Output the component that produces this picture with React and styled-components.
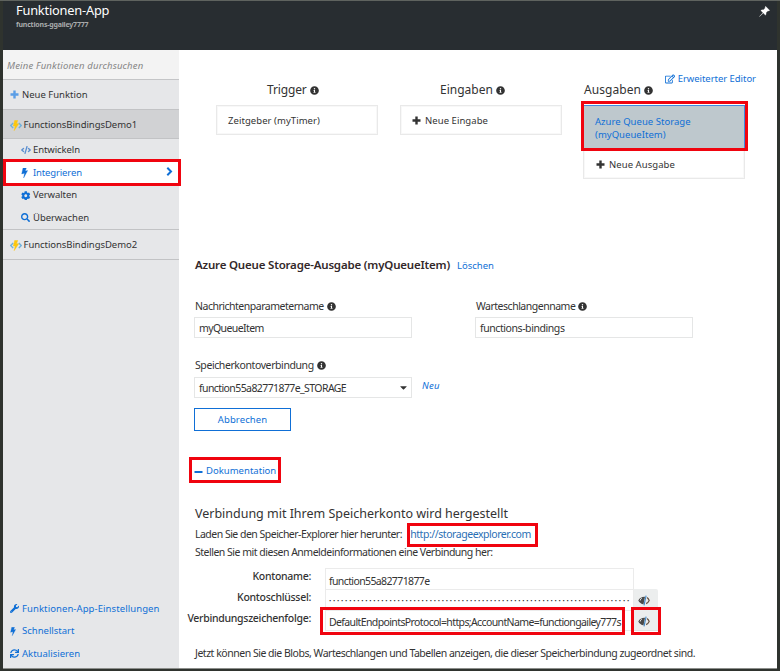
import React from 'react';
import styled, { createGlobalStyle, css } from 'styled-components';
import { FaInfoCircle, FaWrench, FaCode, FaCog, FaSearch, FaSync, FaRegEdit, FaCaretDown } from 'react-icons/fa';

const Global = createGlobalStyle`
  * { box-sizing: border-box; }
  body { margin: 0; background: #2f332e; }
  svg { display: block; flex: none; }
`;

const BLUE = '#0f6fd6';
const RED = '#f0040f';

const Frame = styled.div`
  width: 780px;
  height: 671px;
  overflow: hidden;
  display: flex;
  flex-direction: column;
  background: #2f332e;
  border-top: 1px solid #5f635f;
  padding: 0 3px 2px;
  font-family: "Noto Sans", sans-serif;
  font-size: 9.5px;
  line-height: 16px;
  color: #333;
`;

const Header = styled.header`
  height: 49px;
  flex: none;
  display: flex;
  justify-content: space-between;
  background: #282d31;
  color: #fff;
  padding: 1px 7px 0 13px;
`;

const HeaderTitle = styled.h1`
  margin: 0;
  font-size: 12.8px;
  font-weight: 400;
  letter-spacing: -0.2px;
  line-height: 17px;
`;

const HeaderSub = styled.div`
  font-size: 7px;
  font-weight: 700;
  letter-spacing: -0.2px;
  line-height: 11px;
  color: #a9abac;
`;

const Pin = styled.div`
  padding-top: 4px;
`;

const Body = styled.div`
  flex: 1;
  min-height: 0;
  display: flex;
  border-bottom: 1px solid #8c8e8b;
`;

const Sidebar = styled.nav`
  width: 176px;
  flex: none;
  display: flex;
  flex-direction: column;
  background: #e6e7e9;
`;

const SearchBox = styled.div`
  height: 30px;
  background: #f3f3f3;
  border-bottom: 1px solid #c4c5c7;
  padding-left: 4px;
  line-height: 31px;
  font-style: italic;
  letter-spacing: 0.18px;
  color: #858585;
`;

const SideRow = styled.div`
  height: ${p => p.$h || 30}px;
  display: flex;
  align-items: center;
  gap: ${p => p.$gap || 3}px;
  padding: ${p => p.$pt || 0}px 0 0 7px;
  border-bottom: 1px solid #c2c3c5;
  letter-spacing: ${p => p.$ls || 0}px;
  background: ${p => (p.$active ? '#d1d2d4' : 'transparent')};
`;

const SubList = styled.div`
  height: 91px;
  flex: none;
  border-bottom: 1px solid #c2c3c5;
  display: flex;
  flex-direction: column;
`;

const SubRow = styled.div`
  position: relative;
  height: 22.7px;
  display: flex;
  align-items: center;
  letter-spacing: ${p => p.$ls || -0.08}px;
  ${p => p.$on && css`background: #fff; color: ${BLUE};`}
`;

const SubIcon = styled.span`
  width: 14px;
  margin-left: 16px;
  padding-left: 2px;
  display: flex;
  color: ${BLUE};
`;

const Chevron = styled.span`
  margin-left: auto;
  margin-right: 6px;
  padding-bottom: 2px;
`;

const SideFooter = styled.div`
  margin-top: auto;
  padding-bottom: 3px;
  color: ${BLUE};
`;

const FooterRow = styled.div`
  height: 22.6px;
  display: flex;
  align-items: center;
  padding-left: 7px;
  letter-spacing: ${p => p.$ls || 0}px;
`;

const FooterIcon = styled.span`
  width: 12px;
  display: flex;
`;

const Mark = styled.div`
  position: absolute;
  pointer-events: none;
  inset: ${p => p.$inset};
  border: 3px solid ${RED};
  z-index: 2;
`;

const Main = styled.main`
  flex: 1;
  background: #fff;
  padding: 21px 0 0 15px;
  min-width: 0;
`;

const EditorLink = styled.a`
  display: flex;
  justify-content: flex-end;
  align-items: center;
  gap: 3px;
  height: 16px;
  padding-right: 21px;
  color: ${BLUE};
  letter-spacing: -0.04px;
`;

const Columns = styled.div`
  display: grid;
  grid-template-columns: 162px 162px 162px;
  column-gap: 22px;
  margin: -7px 0 0 22px;
  height: 175px;
  align-content: start;
`;

const ColumnTitle = styled.h2`
  margin: 0 0 5px;
  height: 20px;
  display: flex;
  align-items: center;
  gap: 3px;
  padding-left: ${p => p.$pad}px;
  font-size: 12px;
  font-weight: 400;
  letter-spacing: ${p => p.$ls || 0}px;
`;

const Column = styled.section`
  margin-left: ${p => (p.$last ? '-1px' : 0)};
  margin-right: ${p => (p.$last ? '1px' : 0)};
`;

const Card = styled.div`
  height: 30px;
  border: 1px solid #e9e9e9;
  box-shadow: inset 0 0 0 1px #f8f8f8;
  display: flex;
  align-items: center;
  gap: 4px;
  padding: 1px 0 0 ${p => p.$pad || 11}px;
  letter-spacing: 0.06px;
`;

const SelectedCard = styled.div`
  position: relative;
  height: 44px;
  border: 1px solid #3f8ae0;
  background: #bec8cd;
  color: ${BLUE};
  padding: 9px 0 0 11px;
  line-height: 13px;
  letter-spacing: 0.03px;
`;

const TitleRow = styled.div`
  display: flex;
  align-items: center;
  gap: 7px;
  height: 20px;
  padding-left: 1px;
`;

const Title = styled.h3`
  margin: 0;
  font-size: 11.5px;
  font-weight: 600;
  letter-spacing: -0.188px;
  color: #33282a;
  white-space: nowrap;
`;

const Link = styled.a`
  color: ${BLUE};
  font-style: ${p => (p.$italic ? 'italic' : 'normal')};
  letter-spacing: ${p => (p.$italic ? 0.3 : 0)}px;
`;

const DeleteLink = styled(Link)`
  padding-top: 2px;
`;

const FieldRow = styled.div`
  display: flex;
  align-items: flex-end;
  gap: ${p => p.$gap}px;
  margin-top: ${p => p.$mt}px;
`;

const Field = styled.label`
  display: block;
  width: 218px;
`;

const Label = styled.div`
  display: flex;
  align-items: center;
  gap: 3px;
  height: 16px;
  padding-left: 1px;
  margin-bottom: ${p => p.$mb || 3}px;
  font-size: 10.5px;
  letter-spacing: ${p => p.$ls}px;
`;

const Box = styled.div`
  height: 21px;
  border: 1px solid #e5e6e6;
  display: flex;
  align-items: center;
  justify-content: space-between;
  padding: ${p => (p.$flat ? 0 : 1)}px 2px 0 4px;
  font-size: 10.5px;
  letter-spacing: ${p => p.$ls}px;
`;

const NewLink = styled(Link)`
  margin-bottom: 4px;
`;

const CancelButton = styled.button`
  display: block;
  width: 97px;
  height: 23px;
  margin: 10px 0 0;
  padding: 0;
  border: 1px solid ${BLUE};
  background: #fff;
  color: ${BLUE};
  font: inherit;
  letter-spacing: 0.11px;
`;

const DocToggle = styled.div`
  position: relative;
  width: 84px;
  height: 18px;
  margin-top: 31px;
  display: flex;
  align-items: center;
  gap: 3px;
  color: ${BLUE};
  letter-spacing: 0.02px;
`;

const DocTitle = styled.h4`
  margin: 24px 0 0 1px;
  font-size: 12.5px;
  font-weight: 400;
  line-height: 20px;
  letter-spacing: -0.014px;
`;

const Text = styled.p`
  margin: ${p => p.$mt || 0}px 0 0 1px;
  font-size: 10.5px;
  line-height: 18px;
  white-space: nowrap;
  letter-spacing: ${p => p.$ls}px;
`;

const Marked = styled.span`
  position: relative;
  display: inline-block;
  margin-left: 6px;
  color: #2a6fb5;
  letter-spacing: -0.45px;
`;

const Credentials = styled.div`
  display: grid;
  grid-template-columns: 117px 309px 24px;
  margin-top: 7px;
`;

const CredLabels = styled.div`
  margin: -2px 0 0 -7px;
  width: 124px;
  text-align: right;
  font-size: 10.5px;
  font-weight: 500;
  line-height: 21px;
  letter-spacing: -0.29px;
`;

const CredFields = styled.div`
  margin-left: 14px;
  width: 309px;
`;

const CredField = styled.div`
  position: relative;
  height: 21px;
  border: 1px solid #ebebeb;
  border-bottom-width: ${p => (p.$end ? 1 : 0)}px;
  padding-left: 3px;
  font-size: ${p => p.$fs || 10.5}px;
  line-height: ${p => p.$lh || 23}px;
  letter-spacing: ${p => p.$ls}px;
  white-space: nowrap;
`;

const Eyes = styled.div`
  margin: 21px 0 0 14px;
  width: 24px;
`;

const EyeCell = styled.div`
  position: relative;
  height: 21px;
  display: flex;
  align-items: center;
  justify-content: center;
  padding: 2px 4px 0 0;
  background: #eceeee;
  border-bottom: 1px solid #dfe1e1;
  border-radius: ${p => (p.$first ? '0 2px 0 0' : 0)};
`;

const Bolt = ({ w = 7, h = 10 }) => (
  <svg width={w} height={h} viewBox="0 0 7 10">
    <path d="M2 0h3.3L4.3 3l2.4-.4L2.6 10l.9-4.7-2.8.6z" fill="currentColor" stroke="currentColor" strokeWidth=".3" />
  </svg>
);

const Plus = ({ color = 'currentColor' }) => (
  <svg width="9" height="9" viewBox="0 0 9 9">
    <path d="M4.5 .5v8M.5 4.500h8" stroke={color} strokeWidth="2.400" />
  </svg>
);

const Minus = () => (
  <svg width="9" height="9" viewBox="0 0 9 9">
    <path d="M.5 5h8" stroke="currentColor" strokeWidth="2" />
  </svg>
);

const ChevronIcon = () => (
  <svg width="7" height="9" viewBox="0 0 7 9">
    <path d="M1.300 .8L5 4.500 1.300 8.200" fill="none" stroke="currentColor" strokeWidth="2" />
  </svg>
);

const PinIcon = () => (
  <svg width="11" height="11" viewBox="0 0 11 11">
    <path d="M6.600.3l4.100 4.100-1 .5-.7-.2-2 2c.3 1 .1 1.800-.5 2.500L4.300 7 .8 10.300.4 10.600.7 10.200 4 6.700 1.800 4.500c.7-.6 1.500-.8 2.500-.5l2-2-.2-.7z" fill="#fff" stroke="#fff" strokeWidth=".3" />
  </svg>
);

const FunctionIcon = () => (
  <svg width="12" height="11" viewBox="0 0 12 11">
    <path d="M3.2 3L.8 5.5l2.4 2.6M8.8 3l2.4 2.5-2.4 2.6" fill="none" stroke="#6fb1dc" strokeWidth="1.4" />
    <path d="M4.7.4h3L6.5 3.8h2.2L4.2 10.6l1-4.5H3.3z" fill="#fcc70d" stroke="#fcc70d" strokeWidth=".5" />
  </svg>
);

const EyeIcon = () => (
  <svg width="12" height="11" viewBox="0 0 12 11">
    <path d="M.3 5.500C1.800 2.600 4 1.500 7 1.700L5.500 9.300C3.200 9 1.400 7.700.3 5.500z" fill="#4a4a4a" />
    <path d="M2.100 5.600c.2-1.300.8-2.100 1.800-2.500" fill="none" stroke="#eceeee" strokeWidth=".9" />
    <path d="M9 2.500c1 .7 1.700 1.700 2.200 3-.7 1.500-1.700 2.500-3.100 3.100" fill="none" stroke="#6b5646" strokeWidth="1.200" />
    <path d="M8.100.7L6 10.400" stroke="#3f86c6" strokeWidth="1.100" />
  </svg>
);

const Info = () => <FaInfoCircle size={9} />;

export default function App() {
  return (
    <>
      <Global />
      <Frame>
        <Header>
          <div>
            <HeaderTitle>Funktionen-App</HeaderTitle>
            <HeaderSub>functions-ggailey7777</HeaderSub>
          </div>
          <Pin><PinIcon /></Pin>
        </Header>
        <Body>
          <Sidebar>
            <SearchBox>Meine Funktionen durchsuchen</SearchBox>
            <SideRow><Plus color="#5b9ee6" />Neue Funktion</SideRow>
            <SideRow $active $h={29} $pt={2} $gap={1.5} $ls={-0.05}><FunctionIcon />FunctionsBindingsDemo1</SideRow>
            <SubList>
              <SubRow><SubIcon><FaCode size={10} color="#5b8fd0" /></SubIcon>Entwickeln</SubRow>
              <SubRow $on $ls={-0.14}>
                <SubIcon><Bolt /></SubIcon>Integrieren
                <Chevron><ChevronIcon /></Chevron>
                <Mark $inset="-3px -2px -2px 0" />
              </SubRow>
              <SubRow><SubIcon><FaCog size={9.5} /></SubIcon>Verwalten</SubRow>
              <SubRow $ls={-0.05}><SubIcon><FaSearch size={9} /></SubIcon>Überwachen</SubRow>
            </SubList>
            <SideRow $pt={1} $gap={1.5} $ls={-0.05}><FunctionIcon />FunctionsBindingsDemo2</SideRow>
            <SideFooter>
              <FooterRow $ls={0.09}><FooterIcon><FaWrench size={9} /></FooterIcon>Funktionen-App-Einstellungen</FooterRow>
              <FooterRow><FooterIcon><Bolt w={6} h={9} /></FooterIcon>Schnellstart</FooterRow>
              <FooterRow><FooterIcon><FaSync size={9} /></FooterIcon>Aktualisieren</FooterRow>
            </SideFooter>
          </Sidebar>
          <Main>
            <EditorLink><FaRegEdit size={10} />Erweiterter Editor</EditorLink>
            <Columns>
              <Column>
                <ColumnTitle $pad={51} $ls={-0.15}>Trigger <Info /></ColumnTitle>
                <Card>Zeitgeber (myTimer)</Card>
              </Column>
              <Column>
                <ColumnTitle $pad={40}>Eingaben <Info /></ColumnTitle>
                <Card><Plus />Neue Eingabe</Card>
              </Column>
              <Column $last>
                <ColumnTitle $pad={1} $ls={0.06}>Ausgaben <Info /></ColumnTitle>
                <SelectedCard>
                  Azure Queue Storage<br />(myQueueItem)
                  <Mark $inset="-5px -4px -3px -3px" />
                </SelectedCard>
                <Card $pad={12}><Plus />Neue Ausgabe</Card>
              </Column>
            </Columns>
            <TitleRow>
              <Title>Azure Queue Storage-Ausgabe (myQueueItem)</Title>
              <DeleteLink>Löschen</DeleteLink>
            </TitleRow>
            <FieldRow $gap={63} $mt={23}>
              <Field>
                <Label $ls={-0.49}>Nachrichtenparametername <Info /></Label>
                <Box $ls={-0.6}>myQueueItem</Box>
              </Field>
              <Field>
                <Label $ls={-0.49}>Warteschlangenname <Info /></Label>
                <Box $ls={-0.427}>functions-bindings</Box>
              </Field>
            </FieldRow>
            <FieldRow $gap={10} $mt={19}>
              <Field>
                <Label $mb={4} $ls={-0.41}>Speicherkontoverbindung <Info /></Label>
                <Box $flat $ls={-0.59}>function55a82771877e_STORAGE <FaCaretDown size={11} /></Box>
              </Field>
              <NewLink $italic>Neu</NewLink>
            </FieldRow>
            <CancelButton>Abbrechen</CancelButton>
            <DocToggle>
              <Minus />Dokumentation
              <Mark $inset="-5px -3px -3px -5px" />
            </DocToggle>
            <DocTitle>Verbindung mit Ihrem Speicherkonto wird hergestellt</DocTitle>
            <Text $mt={1} $ls={-0.512}>
              Laden Sie den Speicher-Explorer hier herunter:{' '}
              <Marked>http://storageexplorer.com<Mark $inset="-2px -7px -4px -3px" /></Marked>
            </Text>
            <Text $ls={-0.492}>Stellen Sie mit diesen Anmeldeinformationen eine Verbindung her:</Text>
            <Credentials>
              <CredLabels>
                <div>Kontoname:</div>
                <div>Kontoschlüssel:</div>
                <div>Verbindungszeichenfolge:</div>
              </CredLabels>
              <CredFields>
                <CredField $lh={24} $ls={-0.617}>function55a82771877e</CredField>
                <CredField $fs={6} $lh={22} $ls={1.77}>{'•'.repeat(75)}</CredField>
                <CredField $lh={22} $ls={-0.617} $end>
                  DefaultEndpointsProtocol=https;AccountName=functiongailey777s
                  <Mark $inset="-4px 8px -5px -6px" />
                </CredField>
              </CredFields>
              <Eyes>
                <EyeCell $first><EyeIcon /></EyeCell>
                <EyeCell><EyeIcon /><Mark $inset="-3px -3px -5px -3px" /></EyeCell>
              </Eyes>
            </Credentials>
            <Text $mt={13} $ls={-0.478}>Jetzt können Sie die Blobs, Warteschlangen und Tabellen anzeigen, die dieser Speicherbindung zugeordnet sind.</Text>
          </Main>
        </Body>
      </Frame>
    </>
  );
}
